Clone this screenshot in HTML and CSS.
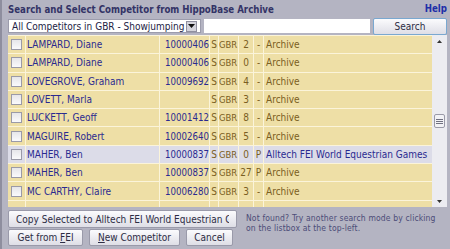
FILE: index.html
```html
<html>
    <head>
        <link rel="stylesheet" href="styles.css">
    </head>
    <body>
        <div class="page">
            <div class="top">
                <h1 class="title">Search and Select Competitor from HippoBase Archive</h1>
                <a class="help" href="#">Help</a>
            </div>

            <div class="searchbar">
                <div class="mode">
                    <span class="mode_text">All Competitors in GBR - Showjumping</span>
                    <span class="drop">
                        <svg width="7" height="4" viewBox="0 0 7 4"><path d="M0 0h7L3.5 4z" fill="#111"/></svg>
                    </span>
                </div>
                <div class="query"></div>
                <button class="btn search">Search</button>
            </div>

            <div class="listbox">
                <div class="rows">
                    <div class="row">
                        <span class="cell cb"><span class="check"></span></span>
                        <span class="cell name">LAMPARD, Diane</span>
                        <span class="cell num">10000406</span>
                        <span class="cell disc">S</span>
                        <span class="cell ctry">GBR</span>
                        <span class="cell rank">2</span>
                        <span class="cell prov">-</span>
                        <span class="cell desc">Archive</span>
                    </div>
                    <div class="row">
                        <span class="cell cb"><span class="check"></span></span>
                        <span class="cell name">LAMPARD, Diane</span>
                        <span class="cell num">10000406</span>
                        <span class="cell disc">S</span>
                        <span class="cell ctry">GBR</span>
                        <span class="cell rank">0</span>
                        <span class="cell prov">-</span>
                        <span class="cell desc">Archive</span>
                    </div>
                    <div class="row">
                        <span class="cell cb"><span class="check"></span></span>
                        <span class="cell name">LOVEGROVE, Graham</span>
                        <span class="cell num">10009692</span>
                        <span class="cell disc">S</span>
                        <span class="cell ctry">GBR</span>
                        <span class="cell rank">4</span>
                        <span class="cell prov">-</span>
                        <span class="cell desc">Archive</span>
                    </div>
                    <div class="row">
                        <span class="cell cb"><span class="check"></span></span>
                        <span class="cell name">LOVETT, Marla</span>
                        <span class="cell num"></span>
                        <span class="cell disc">S</span>
                        <span class="cell ctry">GBR</span>
                        <span class="cell rank">3</span>
                        <span class="cell prov">-</span>
                        <span class="cell desc">Archive</span>
                    </div>
                    <div class="row">
                        <span class="cell cb"><span class="check"></span></span>
                        <span class="cell name">LUCKETT, Geoff</span>
                        <span class="cell num">10001412</span>
                        <span class="cell disc">S</span>
                        <span class="cell ctry">GBR</span>
                        <span class="cell rank">8</span>
                        <span class="cell prov">-</span>
                        <span class="cell desc">Archive</span>
                    </div>
                    <div class="row">
                        <span class="cell cb"><span class="check"></span></span>
                        <span class="cell name">MAGUIRE, Robert</span>
                        <span class="cell num">10002640</span>
                        <span class="cell disc">S</span>
                        <span class="cell ctry">GBR</span>
                        <span class="cell rank">5</span>
                        <span class="cell prov">-</span>
                        <span class="cell desc">Archive</span>
                    </div>
                    <div class="row current">
                        <span class="cell cb"><span class="check"></span></span>
                        <span class="cell name">MAHER, Ben</span>
                        <span class="cell num">10000837</span>
                        <span class="cell disc">S</span>
                        <span class="cell ctry">GBR</span>
                        <span class="cell rank">0</span>
                        <span class="cell prov">P</span>
                        <span class="cell desc">Alltech FEI World Equestrian Games</span>
                    </div>
                    <div class="row">
                        <span class="cell cb"><span class="check"></span></span>
                        <span class="cell name">MAHER, Ben</span>
                        <span class="cell num">10000837</span>
                        <span class="cell disc">S</span>
                        <span class="cell ctry">GBR</span>
                        <span class="cell rank">27</span>
                        <span class="cell prov">P</span>
                        <span class="cell desc">Archive</span>
                    </div>
                    <div class="row">
                        <span class="cell cb"><span class="check"></span></span>
                        <span class="cell name">MC CARTHY, Claire</span>
                        <span class="cell num">10006280</span>
                        <span class="cell disc">S</span>
                        <span class="cell ctry">GBR</span>
                        <span class="cell rank">3</span>
                        <span class="cell prov">-</span>
                        <span class="cell desc">Archive</span>
                    </div>
                    <!-- next row is only peeking in under the fold -->
                    <div class="row">
                        <span class="cell cb"></span>
                        <span class="cell name"></span>
                        <span class="cell num"></span>
                        <span class="cell disc"></span>
                        <span class="cell ctry"></span>
                        <span class="cell rank"></span>
                        <span class="cell prov"></span>
                        <span class="cell desc"></span>
                    </div>
                </div>
                <div class="scrollbar">
                    <span class="arrow">
                        <svg width="5" height="3" viewBox="0 0 5 3"><path d="M0 3h5L2.5 0z" fill="#333"/></svg>
                    </span>
                    <span class="track track_top"></span>
                    <span class="thumb"><span class="grip"></span></span>
                    <span class="track"></span>
                    <span class="arrow">
                        <svg width="5" height="3" viewBox="0 0 5 3"><path d="M0 0h5L2.5 3z" fill="#333"/></svg>
                    </span>
                </div>
            </div>

            <div class="bottom">
                <div class="actions">
                    <button class="btn copy"><span class="clip">Copy Selected to Alltech FEI World Equestrian Games</span></button>
                    <div class="buttons">
                        <button class="btn get">Get from <u>F</u>EI</button>
                        <button class="btn new"><u>N</u>ew Competitor</button>
                        <button class="btn cancel">Cancel</button>
                    </div>
                </div>
                <p class="hint">Not found? Try another search mode by clicking on the listbox at the top-left.</p>
            </div>
        </div>
    </body>
</html>
```

FILE: styles.css
```css
body {
    margin: 0;
    background-color: #b4b4c2;
    font-family: "DejaVu Sans Condensed", "DejaVu Sans", sans-serif;
    font-stretch: condensed;
    font-size: 10px;
}

.page {
    height: 249px;
    box-sizing: border-box;
    border-left: 2px solid #8e8e9e;
    padding: 3px 3px 0 6px;
}

.top {
    display: flex;
    justify-content: space-between;
    align-items: flex-start;
    height: 14px;
}

.title {
    margin: 1px 0 0 0;
    font-size: 9.6px;
    font-weight: bold;
    color: #333366;
}

.help {
    font-size: 9.6px;
    font-weight: bold;
    color: #1f2fa8;
    text-decoration: none;
}

.searchbar {
    display: flex;
    align-items: center;
    gap: 3px;
    height: 18px;
}

.mode {
    display: flex;
    align-items: center;
    justify-content: space-between;
    width: 193px;
    height: 14px;
    box-sizing: border-box;
    padding: 0 3px 0 3px;
    background-color: #ffffff;
    border: 1px solid #9c9cac;
    color: #222244;
    font-size: 10px;
}

.drop {
    display: flex;
    align-items: center;
    justify-content: center;
    width: 9px;
    height: 9px;
    background-color: #d4d4dc;
    border: 1px solid #9090a0;
}

.query {
    flex: 1;
    height: 14px;
    background-color: #ffffff;
}

.btn {
    font-family: inherit;
    font-stretch: condensed;
    font-size: 10px;
    color: #2c2c44;
    background: linear-gradient(#fbfbfd, #dedee6);
    border: 1px solid #9a9aaa;
    border-radius: 2px;
    padding: 0 8px;
    height: 17px;
    white-space: nowrap;
}

.search {
    width: 74px;
    border-color: #7aa8d0;
}

.get {
    width: 75px;
}

.new {
    width: 91px;
}

.cancel {
    width: 47px;
    padding: 0;
}

.listbox {
    display: flex;
    height: 172px;
    overflow: hidden;
}

.rows {
    flex: 1;
    display: flex;
    flex-direction: column;
    gap: 1px;
    padding-top: 1px;
    background-color: #fbf4da;
}

.row {
    display: grid;
    grid-template-columns: 17px 133px 49px 8px 19px 14px 9px 1fr;
    gap: 1px;
    flex: 0 0 17.3px;
}

.cell {
    display: flex;
    align-items: center;
    background-color: #eedfa6;
    color: #7a5e22;
    white-space: nowrap;
    overflow: hidden;
}

.current .cell {
    background-color: #dcdce8;
}

.cb {
    justify-content: center;
}

.check {
    width: 9px;
    height: 9px;
    background: linear-gradient(#e6e6ea, #fafafc);
    border: 1px solid #9a9aa8;
}

.name {
    padding-left: 1px;
    color: #2a2a90;
}

.num {
    justify-content: flex-end;
    color: #2a2a90;
    font-size: 9.6px;
}

.disc, .rank, .prov {
    justify-content: center;
}

.ctry {
    font-size: 9.4px;
}

.desc {
    padding-left: 2px;
}

.current .desc {
    color: #2a2a90;
}

.scrollbar {
    display: flex;
    flex-direction: column;
    width: 15px;
    background-color: #ececf1;
}

.arrow {
    display: flex;
    align-items: center;
    justify-content: center;
    height: 12px;
}

.track_top {
    height: 62px;
}

.track {
    flex: 1;
}

.thumb {
    display: flex;
    align-items: center;
    justify-content: center;
    margin: 0 2px;
    height: 14px;
    box-sizing: border-box;
    border: 1px solid #9a9aa8;
    border-radius: 2px;
    background-color: #f2f2f6;
}

.grip {
    width: 7px;
    height: 5px;
    background: repeating-linear-gradient(#707080 0 1px, transparent 1px 2px);
}

.bottom {
    display: flex;
    gap: 9px;
    margin-top: 3px;
}

.actions {
    display: flex;
    flex-direction: column;
    gap: 1px;
    width: 229px;
}

.copy {
    width: 229px;
    height: 18px;
    padding: 0 7px;
    text-align: left;
    overflow: hidden;
}

.clip {
    display: block;
    overflow: hidden;
}

.buttons {
    display: flex;
    gap: 6px;
}

.hint {
    margin: 3px 0 0 0;
    width: 200px;
    font-size: 8.5px;
    color: #4c4c78;
    letter-spacing: 0.15px;
    line-height: 10px;
}
```
